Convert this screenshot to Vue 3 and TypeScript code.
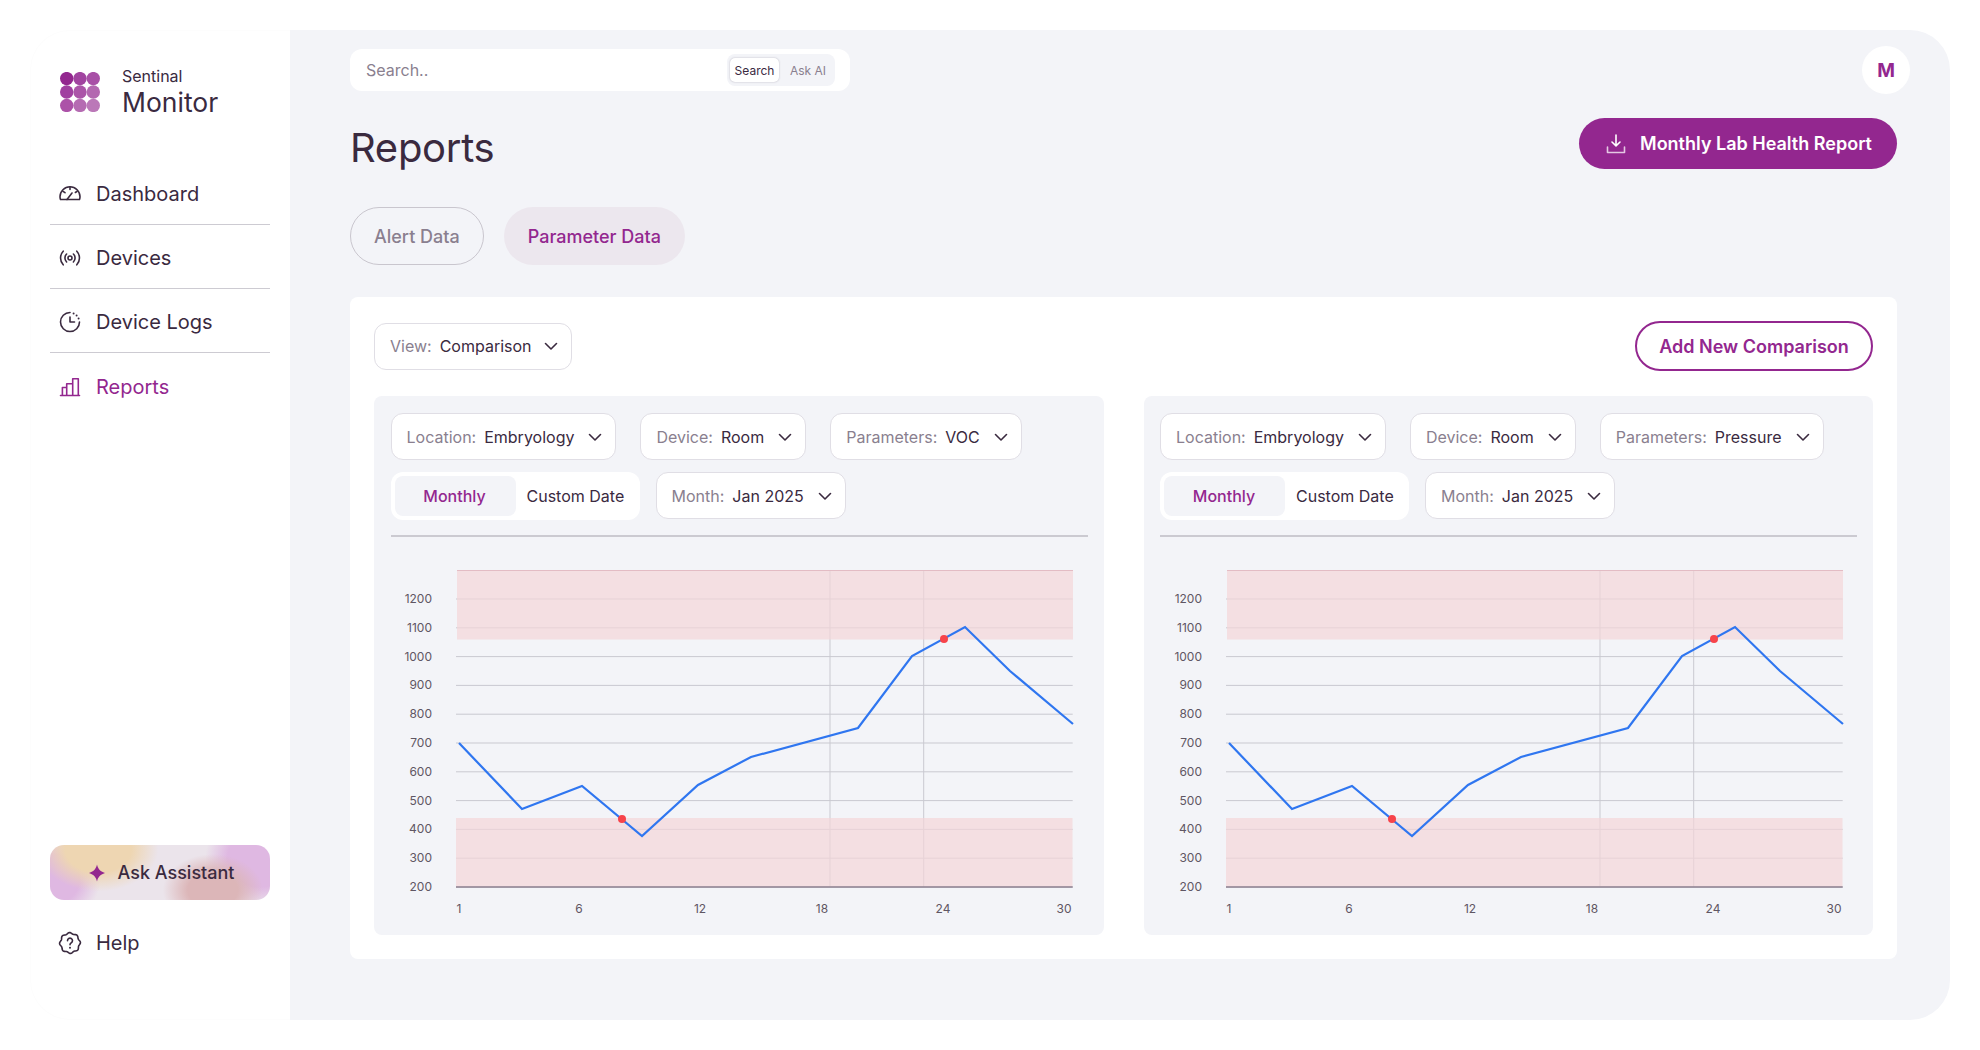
<script setup lang="ts">
interface Filter { label: string; value: string }
interface PanelData { params: string }

const nav = [
  { name: 'Dashboard', icon: 'gauge' },
  { name: 'Devices', icon: 'signal' },
  { name: 'Device Logs', icon: 'clock' },
  { name: 'Reports', icon: 'bars' },
]

const panels: PanelData[] = [{ params: 'VOC' }, { params: 'Pressure' }]

const filtersFor = (p: PanelData): Filter[] => [
  { label: 'Location:', value: 'Embryology' },
  { label: 'Device:', value: 'Room' },
  { label: 'Parameters:', value: p.params },
]

// Chart coordinates are local to the panel (origin: panel left edge, divider bottom).
const X0 = 374
const Y0 = 536
const lx = (x: number) => x - X0
const ly = (y: number) => y - Y0

const plotL = lx(456)
const plotR = lx(1072.7)
const ticks = [1200, 1100, 1000, 900, 800, 700, 600, 500, 400, 300, 200]
const yOf = (i: number) => ly(599 + i * 28.8)
const yTicks = ticks.map((t, i) => ({ t, y: yOf(i) }))
const xTicks = [
  { t: '1', x: lx(459) },
  { t: '6', x: lx(579) },
  { t: '12', x: lx(700) },
  { t: '18', x: lx(822) },
  { t: '24', x: lx(943) },
  { t: '30', x: lx(1064) },
]
const linePts: [number, number][] = [
  [459, 743], [522, 809], [582, 786], [642, 836], [698, 785], [751, 757],
  [858, 728], [912, 656], [965, 627], [1010, 671], [1073, 724],
]
const line = linePts.map(([x, y]) => `${lx(x)},${ly(y)}`).join(' ')
const dots = [
  { x: lx(622), y: ly(819) },
  { x: lx(944), y: ly(639) },
]
const vLines = [lx(830), lx(923.7)]

const logoDots = [
  { cx: 66.7, cy: 78.6, f: '#93278f' },
  { cx: 80, cy: 78.6, f: '#a144a0' },
  { cx: 93.3, cy: 78.6, f: '#a850a6' },
  { cx: 66.7, cy: 92, f: '#a040a0' },
  { cx: 80, cy: 92, f: '#ab55a8' },
  { cx: 93.3, cy: 92, f: '#b368b0' },
  { cx: 66.7, cy: 105.4, f: '#ac52a8' },
  { cx: 80, cy: 105.4, f: '#b56bb2' },
  { cx: 93.3, cy: 105.4, f: '#bb78b8' },
]

const scallop = (() => {
  const pts: string[] = []
  for (let i = 0; i < 96; i++) {
    const t = (i / 96) * Math.PI * 2
    const r = 9.8 + 0.65 * Math.cos(8 * t + Math.PI / 8)
    pts.push(`${(12 + r * Math.cos(t)).toFixed(2)},${(12 + r * Math.sin(t)).toFixed(2)}`)
  }
  return pts.join(' ')
})()
</script>

<template>
  <div class="page">
    <div class="frame">
      <aside class="sidebar">
        <div class="brand">
          <svg class="logo" viewBox="60 72 40 40" width="40" height="40">
            <circle v-for="(d, i) in logoDots" :key="i" :cx="d.cx" :cy="d.cy" r="6.7" :fill="d.f" />
          </svg>
          <div class="brand-text">
            <div class="brand-sm">Sentinal</div>
            <div class="brand-lg">Monitor</div>
          </div>
        </div>

        <nav class="nav">
          <a v-for="item in nav" :key="item.name" class="nav-item" :class="{ active: item.name === 'Reports' }">
            <svg class="nav-icon" viewBox="0 0 24 24" width="24" height="24" fill="none" stroke="currentColor" stroke-width="1.6" stroke-linecap="round" stroke-linejoin="round">
              <template v-if="item.icon === 'gauge'">
                <path d="M2.5 17.5h19c.3-.9.5-1.8.5-2.8C22 9.3 17.5 4.8 12 4.8S2 9.3 2 14.7c0 1 .2 1.9.5 2.8z" />
                <path d="M9 17.5l5-6.5M12 5v2.5M5 9.3l2 1.4M19 9.3l-1.6 1.2" />
              </template>
              <template v-else-if="item.icon === 'signal'">
                <circle cx="12" cy="12" r="2" />
                <path d="M8.6 8a5.6 5.6 0 0 0 0 8M15.4 8a5.6 5.6 0 0 1 0 8M5.2 5.2a10 10 0 0 0 0 13.6M18.8 5.2a10 10 0 0 1 0 13.6" />
              </template>
              <template v-else-if="item.icon === 'clock'">
                <path d="M12 2.5A9.5 9.5 0 1 0 21.5 12" />
                <path d="M12 7v5h4.5" />
                <path d="M15.6 3.4v0M18.6 5.5v0M20.6 8.4v0" stroke-width="2" />
              </template>
              <template v-else>
                <path d="M2.5 20.5h19M4.4 20.5v-8h4.3v8M8.7 20.5V8.7h6v11.8M14.7 20.5V3.7h5.6v16.8" />
              </template>
            </svg>
            <span>{{ item.name }}</span>
          </a>
        </nav>

        <div class="side-bottom">
          <button class="assistant">
            <svg viewBox="0 0 18 18" width="18" height="18"><path d="M9 .5c.9 4.200 3 6.900 8 8.500-5 1.600-7.100 4.300-8 8.500-.9-4.200-3-6.900-8-8.500 5-1.600 7.100-4.300 8-8.500z" fill="#93278f" /></svg>
            <span>Ask Assistant</span>
          </button>
          <a class="nav-item help">
            <svg class="nav-icon" viewBox="0 0 24 24" width="24" height="24" fill="none" stroke="currentColor" stroke-width="1.6" stroke-linecap="round" stroke-linejoin="round">
              <polygon :points="scallop" />
              <path d="M9.500 9.700a2.500 2.500 0 1 1 3.800 2.100c-.9.500-1.300 1-1.300 1.900" />
              <path d="M12 16.700v0" stroke-width="2" />
            </svg>
            <span>Help</span>
          </a>
        </div>
      </aside>

      <main class="main">
        <header class="topbar">
          <div class="search">
            <span class="placeholder">Search..</span>
            <div class="seg">
              <span class="seg-on">Search</span>
              <span class="seg-off">Ask AI</span>
            </div>
          </div>
          <div class="avatar">M</div>
        </header>

        <div class="title-row">
          <h1 class="title">Reports</h1>
          <button class="primary">
            <svg viewBox="0 0 24 24" width="24" height="24" fill="none" stroke="#fff" stroke-width="1.6" stroke-linecap="round" stroke-linejoin="round">
              <path d="M12 3v10.500M8 10l4 3.800 4-3.800" />
              <path d="M3.500 15v5.500h17V15" opacity=".75" />
            </svg>
            <span>Monthly Lab Health Report</span>
          </button>
        </div>

        <div class="tabs">
          <button class="tab">Alert Data</button>
          <button class="tab tab-on">Parameter Data</button>
        </div>

        <section class="card">
          <div class="card-head">
            <div class="select view">
              <span class="lbl">View:</span><span class="val">Comparison</span>
              <svg class="chev" viewBox="0 0 16 16" width="16" height="16"><path d="M2.500 5.500 8 11l5.500-5.500" /></svg>
            </div>
            <button class="outline">Add New Comparison</button>
          </div>

          <div class="panels">
            <div v-for="p in panels" :key="p.params" class="panel">
              <div class="filters">
                <div v-for="f in filtersFor(p)" :key="f.label" class="select">
                  <span class="lbl">{{ f.label }}</span><span class="val">{{ f.value }}</span>
                  <svg class="chev" viewBox="0 0 16 16" width="16" height="16"><path d="M2.500 5.500 8 11l5.500-5.500" /></svg>
                </div>
              </div>
              <div class="filters second">
                <div class="toggle">
                  <span class="t-on">Monthly</span>
                  <span class="t-off">Custom Date</span>
                </div>
                <div class="select">
                  <span class="lbl">Month:</span><span class="val">Jan 2025</span>
                  <svg class="chev" viewBox="0 0 16 16" width="16" height="16"><path d="M2.500 5.500 8 11l5.500-5.500" /></svg>
                </div>
              </div>
              <div class="divider"></div>

              <svg class="chart" viewBox="0 0 729.5 398" width="729.5" height="398">
                <line v-for="g in yTicks" :key="g.t" :x1="plotL" :x2="plotR" :y1="g.y" :y2="g.y" class="grid" />
                <line v-for="v in vLines" :key="v" :x1="v" :x2="v" :y1="ly(570)" :y2="ly(887)" class="grid" />
                <rect :x="lx(457)" :y="ly(570)" :width="616" height="69.500" class="band" />
                <rect :x="lx(456)" :y="ly(818)" :width="616.500" height="69" class="band" />
                <line :x1="lx(457)" :x2="lx(1073)" :y1="ly(570.500)" :y2="ly(570.500)" class="band-top" />
                <line :x1="plotL" :x2="plotR" :y1="ly(887)" :y2="ly(887)" class="axis" />
                <text v-for="g in yTicks" :key="'y' + g.t" :x="lx(432)" :y="g.y + 4" class="tick" text-anchor="end">{{ g.t }}</text>
                <text v-for="t in xTicks" :key="'x' + t.t" :x="t.x" :y="ly(912.500)" class="tick" text-anchor="middle">{{ t.t }}</text>
                <polyline :points="line" class="series" />
                <circle v-for="(d, i) in dots" :key="i" :cx="d.x" :cy="d.y" r="4" fill="#f7434a" />
              </svg>
            </div>
          </div>
        </section>
      </main>
    </div>
  </div>
</template>

<style>
html, body { margin: 0; background: #fff; }
</style>

<style scoped>
* { box-sizing: border-box; }
.page {
  width: 1980px; height: 1050px; padding: 30px; overflow: hidden; background: #fff;
  font-family: Inter, "Liberation Sans", sans-serif; color: #3a2a3f;
}
.frame { display: flex; height: 990px; }

.sidebar {
  width: 260px; flex: none; padding: 41px 20px 0 19px; display: flex; flex-direction: column;
  border-radius: 40px 0 0 40px; border: 1px solid #fdfdfd; border-right: 0;
}
.brand { display: flex; align-items: center; gap: 22px; padding-left: 10px; height: 40px; }
.logo { flex: none; }
.brand-text { padding-top: 1px; }
.brand-sm { font-size: 16px; line-height: 18px; }
.brand-lg { font-size: 26.500px; line-height: 32px; margin-top: 1px; }
.nav { margin-top: 48.500px; display: flex; flex-direction: column; }
.nav-item {
  display: flex; align-items: center; gap: 14px; height: 64px; padding: 4px 0 0 8px;
  font-size: 20px; border-bottom: 1.5px solid #cdcbd2;
}
.nav-item:last-child { border-bottom: 0; }
.nav-item.active { color: #93278f; }
.nav-icon { flex: none; }
.side-bottom { margin-top: auto; padding-bottom: 48px; }
.assistant {
  width: 220px; height: 55px; border: 0; border-radius: 14px; display: flex; align-items: center; justify-content: center;
  gap: 12px; font: 500 18px Inter, sans-serif; color: #3a2a3f; padding: 0 0 0 2px;
  background:
    radial-gradient(ellipse 60px 42px at 22% 8%, #eed6b2 55%, transparent 100%),
    radial-gradient(ellipse 46px 44px at 2% 62%, #dfb8e2 55%, transparent 100%),
    radial-gradient(ellipse 50px 36px at 74% 82%, #dcb6b8 50%, transparent 100%),
    radial-gradient(ellipse 56px 48px at 96% 24%, #dfb8e2 60%, transparent 100%),
    #ebe4eb;
}
.help { margin-top: 15px; height: 56px; border-bottom: 0; padding-top: 0; }

.main { flex: 1; background: #f3f4f8; border-radius: 0 40px 40px 0; padding: 16px 53px 0 60px; min-width: 0; }
.topbar { display: flex; align-items: center; justify-content: space-between; height: 48px; margin-right: -13px; }
.search {
  width: 500px; height: 42px; background: #fff; border-radius: 12px; display: flex; align-items: center;
  justify-content: space-between; padding: 0 16px 0 16px;
}
.placeholder { font-size: 16px; color: #8a7f8f; }
.seg { width: 108px; height: 32px; background: #f3f4f8; border-radius: 8px; display: flex; align-items: center; padding: 0 3px; font-size: 12px; margin-right: -1px; }
.seg-on { width: 49px; height: 24px; background: #fff; border-radius: 5px; box-shadow: 0 0 2px rgba(70,60,90,.35); display: flex; align-items: center; justify-content: center; }
.seg-off { margin-left: 11px; color: #8a7f8f; }
.avatar { width: 48px; height: 48px; border-radius: 50%; background: #fff; color: #93278f; font-weight: 700; font-size: 19px; display: flex; align-items: center; justify-content: center; }

.title-row { display: flex; align-items: center; justify-content: space-between; margin-top: 24px; height: 51px; }
.title { margin: 8px 0 0; font-size: 40px; font-weight: 400; line-height: 48px; letter-spacing: -.3px; }
.primary {
  width: 318px; height: 51px; border: 0; border-radius: 26px; background: #93278f; color: #fff; display: flex; align-items: center;
  justify-content: center; gap: 12px; font: 600 18px Inter, sans-serif; padding: 0;
}
.tabs { display: flex; gap: 20px; margin-top: 38px; }
.tab {
  height: 58px; padding: 0 23px; border-radius: 29px; border: 1.5px solid #c9c6ce; background: transparent;
  font: 500 18px Inter, sans-serif; color: #8a7f8f;
}
.tab-on { border-color: transparent; background: #ece7ee; color: #93278f; }

.card { margin-top: 32px; background: #fff; border-radius: 8px; padding: 24px; height: 662px; }
.card-head { display: flex; align-items: center; justify-content: space-between; height: 50px; }
.outline {
  width: 238px; height: 50px; border: 2px solid #93278f; border-radius: 25px; background: #fff; color: #93278f;
  font: 600 18px Inter, sans-serif; padding: 0;
}
.select {
  display: flex; align-items: center; height: 47px; padding: 0 12px 0 15px; background: #fff;
  border: 1.5px solid #e0dee5; border-radius: 12px; font-size: 16px; white-space: nowrap;
}
.lbl { color: #8a7f8f; margin-right: 8px; }
.val { color: #3a2a3f; }
.chev { margin-left: 13px; fill: none; stroke: #3a2a3f; stroke-width: 1.6; stroke-linecap: round; stroke-linejoin: round; }
.view .chev { margin-left: 11px; }

.panels { display: grid; grid-template-columns: minmax(0, 1fr) minmax(0, 1fr); gap: 40px; margin-top: 25px; }
.panel { background: #f3f4f8; border-radius: 8px; height: 539px; padding: 17px 16px 0 16.500px; }
.filters { display: flex; gap: 24px; }
.second { gap: 16px; margin-top: 12px; }
.toggle { display: flex; align-items: center; height: 48px; width: 249px; background: #fff; border-radius: 12px; padding: 4px; font-size: 16px; }
.t-on { width: 121px; height: 40px; border-radius: 8px; background: #f3f4f8; color: #93278f; font-weight: 500; display: flex; align-items: center; justify-content: center; padding-right: 1px; }
.t-off { margin-left: 11px; color: #3a2a3f; }
.divider { height: 1.500px; background: #cbcad1; margin-top: 15px; }
.chart { display: block; margin-left: -16.500px; overflow: visible; margin-top: -1px; }
.grid { stroke: #c9c9d0; stroke-width: 1; }
.band { fill: #f4d6d9; fill-opacity: .7; }
.band-top { stroke: #e3bcc4; stroke-width: 1; }
.axis { stroke: #8b8090; stroke-width: 1.500; }
.tick { font-size: 12px; fill: #5f5663; font-family: Inter, sans-serif; }
.series { fill: none; stroke: #2f76f0; stroke-width: 2.200; stroke-linejoin: miter; }
</style>
